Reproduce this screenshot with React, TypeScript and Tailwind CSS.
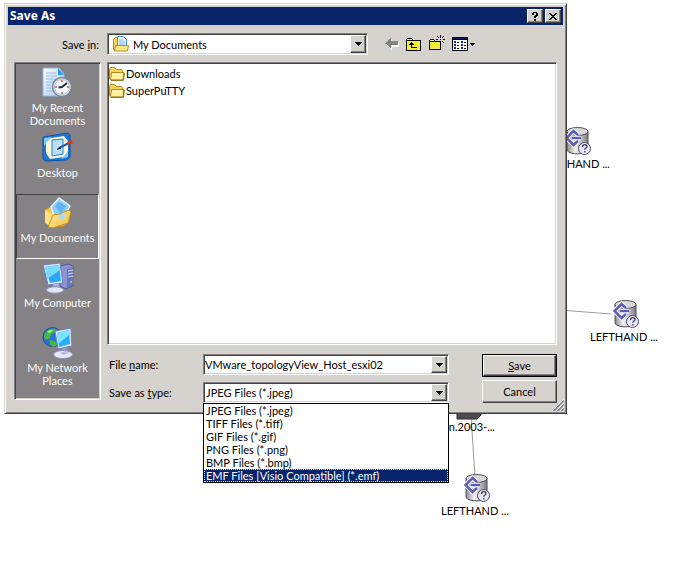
import { useId, type ReactNode } from "react";
import clsx from "clsx";

const FOLDERS = ["Downloads", "SuperPuTTY"];

const FILE_TYPES = [
  "JPEG Files (*.jpeg)",
  "TIFF Files (*.tiff)",
  "GIF Files (*.gif)",
  "PNG Files (*.png)",
  "BMP Files (*.bmp)",
  "EMF Files [Visio Compatible] (*.emf)",
];

const SUNKEN =
  "border border-t-[#848284] border-l-[#848284] border-r-white border-b-white p-px shadow-[inset_1px_1px_0_#424142,inset_-1px_-1px_0_#d6d3ce]";
const RAISED =
  "border border-t-white border-l-white border-r-[#424142] border-b-[#424142] bg-[#d6d3ce] shadow-[inset_-1px_-1px_0_#848284]";

/* ---------- place bar icons ---------- */

function RecentIcon() {
  const id = useId();
  return (
    <svg viewBox="0 0 32 32" className="h-8 w-8" aria-hidden="true">
      <defs>
        <linearGradient id={id} x1="0" y1="0" x2="1" y2="1">
          <stop offset="0" stopColor="#ffffff" />
          <stop offset="1" stopColor="#9cc8f8" />
        </linearGradient>
      </defs>
      <path d="M1 1h16l5 6v22H1z" fill={`url(#${id})`} stroke="#8bb6ea" />
      <path d="M16 1v7h6z" fill="#2f9cf0" />
      <path d="M4 6h10M4 9h11M4 12h10M4 15h7M4 18h5M4 21h5M4 24h6" stroke="#9dbbe4" />
      <circle cx="20" cy="20" r="9.5" fill="#dfe6ee" stroke="#7b8796" strokeWidth="1.5" />
      <circle cx="20" cy="20" r="7.5" fill="#f7fbff" stroke="#a9c4e0" />
      <path d="M20 20l5-4M20.500 20l-4 .5" stroke="#182848" strokeWidth="1.800" />
      <path d="M20 13v2M20 25v2M13 20h2M25 20h2" stroke="#e0582c" strokeWidth="1.500" />
    </svg>
  );
}

function DesktopIcon() {
  return (
    <svg viewBox="0 0 32 32" className="h-8 w-8" aria-hidden="true">
      <path d="M1 5l25-4 2 2v22l-3 3-22 1-2-3z" fill="#1b78d8" stroke="#0b55ac" />
      <path d="M2 6l8-1-8 9zM26 17v8l-7 2z" fill="#7cc8ff" />
      <path d="M9 6l13-2 4 5v10l-5 6-13 2-4-6V11z" fill="#fff6d8" />
      <path d="M10 8l11-1v15l-11 2z" fill="#b9e0fb" stroke="#2787d8" />
      <path d="M13 18l6-6 2 3-5 3z" fill="#e6f5ff" />
      <path d="M17 16l10-5" stroke="#35589c" strokeWidth="2" />
      <path d="M15 17.500l4-2" stroke="#16213c" strokeWidth="1.500" />
      <path d="M26 11.500l4-2" stroke="#d83a1c" strokeWidth="3.500" />
    </svg>
  );
}

function DocumentsIcon() {
  const id = useId();
  return (
    <svg viewBox="0 0 32 32" className="h-8 w-8" aria-hidden="true">
      <defs>
        <linearGradient id={id} x1="0" y1="0" x2="1" y2="1">
          <stop offset="0" stopColor="#fff3a8" />
          <stop offset="1" stopColor="#f2b93a" />
        </linearGradient>
      </defs>
      <path d="M3 13l5-3 3 2 8-3 6 6-3 14-15 1z" fill="#f4c64c" stroke="#c88f1c" />
      <path d="M9 10l8-9 11 8-6 11-9 1z" fill="#8fd0fa" stroke="#e9f7ff" strokeWidth="1.500" />
      <path d="M13 9l4-4 7 4-5 8z" fill="#5fb4f0" />
      <path d="M3 13l8 5-3 11-5-3z" fill="#ffe27a" />
      <path d="M11 18l7-1 9-4 2 2-3 11-15 5-5-1z" fill={`url(#${id})`} stroke="#c88f1c" />
      <path d="M16 20l5-4 3 3-5 4z" fill="#a8dcff" />
    </svg>
  );
}

function ComputerIcon() {
  return (
    <svg viewBox="0 0 32 32" className="h-8 w-8" aria-hidden="true">
      <path d="M18 4l9-2 5 3v18l-8 4-6-3z" fill="#8d94d4" stroke="#4c55a0" />
      <path d="M25 7l7-2v18l-7 3z" fill="#6b74be" />
      <path d="M26 9l5-1M26 12l5-1M26 15l5-1" stroke="#d5daf8" />
      <path d="M28 19h2v2h-2z" fill="#7ce070" />
      <path d="M1 3l17-2 3 20-15 2z" fill="#dfe5fa" stroke="#6e7cc0" />
      <path d="M3 5l14-2 2 16-11 2z" fill="#28a9f4" />
      <path d="M3 5l14-2 1 5-13 9z" fill="#76dcff" />
      <path d="M11 22l6-1 1 6-6 1z" fill="#a9b2d8" />
      <ellipse cx="13" cy="28" rx="8.500" ry="3.200" fill="#e2e6f4" stroke="#8c94b8" />
    </svg>
  );
}

function NetworkIcon() {
  return (
    <svg viewBox="0 0 32 32" className="h-8 w-8" aria-hidden="true">
      <circle cx="10.500" cy="10" r="9.500" fill="#2a70d8" stroke="#174ea4" />
      <path d="M3 6c4-5 8-5 11-4l-2 4-3 1-1 4-4 2-2-3zM8 13l5 1 2 4-4 2-3-3z" fill="#46b83c" />
      <path d="M5 5c2-2 4-2 6-2l-3 3z" fill="#a4f08c" />
      <path d="M13 4l16-3 1 18-14 3z" fill="#dfe5fa" stroke="#6e7cc0" />
      <path d="M15 6l12-3 1 14-11 3z" fill="#28b0f4" />
      <path d="M15 6l12-3v5l-11 9z" fill="#7ce2ff" />
      <path d="M20 21l5-1 1 6-5 1z" fill="#9099c8" />
      <ellipse cx="21" cy="27.500" rx="9.500" ry="4" fill="#e6e9f5" stroke="#8c94b8" />
      <path d="M18 26l6-2 3 2-6 2z" fill="#b8bfdc" />
    </svg>
  );
}

const PLACES: { lines: string[]; icon: ReactNode; active?: boolean }[] = [
  { lines: ["My Recent", "Documents"], icon: <RecentIcon /> },
  { lines: ["Desktop"], icon: <DesktopIcon /> },
  { lines: ["My Documents"], icon: <DocumentsIcon />, active: true },
  { lines: ["My Computer"], icon: <ComputerIcon /> },
  { lines: ["My Network", "Places"], icon: <NetworkIcon /> },
];

/* ---------- small icons ---------- */

function FolderIcon() {
  return (
    <svg viewBox="0 0 16 14" className="h-3.5 w-4 shrink-0" aria-hidden="true">
      <path d="M.5 2.500l1-2h4l2 2h5l1 1v9h-12l-1-1z" fill="#f7d35c" stroke="#b58a1e" />
      <path d="M2.500 5.500h12.500l-1 7.500H1.500z" fill="#ffee9c" stroke="#b58a1e" />
      <path d="M4 7h10" stroke="#fffbd8" />
      <path d="M2 13.300h12.500l.8-7" fill="none" stroke="#8a6710" />
    </svg>
  );
}

function MyDocsSmallIcon() {
  return (
    <svg viewBox="0 0 16 16" className="ml-1 h-4 w-4 shrink-0" aria-hidden="true">
      <path d="M.5 3.500l2-2h3v13h-4l-1-1z" fill="#f7d35c" stroke="#b58a1e" />
      <path d="M4.500.5h6l3 3v9h-9z" fill="#e9f5ff" stroke="#3c8ed8" />
      <path d="M6 4h4M6 6h6M6 8h6" stroke="#7cb6ea" />
      <path d="M2.500 9.500h13l-1 5.500h-13z" fill="#ffe681" stroke="#b58a1e" />
    </svg>
  );
}

function DropArrow() {
  return (
    <svg viewBox="0 0 7 4" className="h-1 w-[7px]" shapeRendering="crispEdges" aria-hidden="true">
      <path d="M0 0h7v1H6v1H5v1H4v1H3V3H2V2H1V1H0z" fill="#000" />
    </svg>
  );
}

function BackIcon() {
  return (
    <svg viewBox="0 0 14 12" className="h-3 w-3.5" shapeRendering="crispEdges" aria-hidden="true">
      <path d="M1 6h1V5h1V4h1V3h1V2h1V1h1v3h7v5H7v3H6v-1H5v-1H4V9H3V8H2V7H1z" fill="#fff" />
      <path d="M0 5h1V4h1V3h1V2h1V1h1V0h1v3h7v4H6v3H5V9H4V8H3V7H2V6H0z" fill="#848284" />
    </svg>
  );
}

function UpIcon() {
  return (
    <svg viewBox="0 0 15 13" className="h-[13px] w-[15px]" shapeRendering="crispEdges" aria-hidden="true">
      <path d="M0 1h1V0h5v1h1v1h8v11H0z" fill="#000" />
      <path d="M1 1h5v1H1zM1 3h13v9H1z" fill="#f5ee3a" />
      <path d="M5 4h1v1h1v1h1v1H6v2h5v1H5V7H3V6h1V5h1z" fill="#000" />
    </svg>
  );
}

function NewFolderIcon() {
  return (
    <svg viewBox="0 0 16 16" className="h-4 w-4" shapeRendering="crispEdges" aria-hidden="true">
      <path d="M0 5h1V4h4v1h1v1h6v9H0z" fill="#000" />
      <path d="M1 5h4v1H1zM1 7h10v7H1z" fill="#f5ee3a" />
      <path
        d="M11 0h1v3h-1zM11 6h1v3h-1zM7 4h2v1H7zM14 4h2v1h-2zM8 1h1v1H8zM9 2h1v1H9zM14 1h1v1h-1zM13 2h1v1h-1zM13 6h1v1h-1zM14 7h1v1h-1zM9 6h1v1H9zM11 4h1v1h-1z"
        fill="#000"
      />
    </svg>
  );
}

function ViewsIcon() {
  return (
    <svg viewBox="0 0 16 14" className="h-3.5 w-4" shapeRendering="crispEdges" aria-hidden="true">
      <path d="M0 0h16v14H0z" fill="#000" />
      <path d="M1 1h14v1H1z" fill="#08246b" />
      <path d="M1 3h14v10H1z" fill="#fff" />
      <path d="M2 4h2v2H2zM9 4h2v2H9zM2 7h2v2H2zM9 7h2v2H9zM2 10h2v2H2zM9 10h2v2H9z" fill="#1c1c9c" />
      <path d="M5 5h2v1H5zM12 5h2v1h-2zM5 8h2v1H5zM12 8h2v1h-2zM5 11h2v1H5zM12 11h2v1h-2z" fill="#000" />
    </svg>
  );
}

function StorageIcon() {
  const id = useId();
  return (
    <svg viewBox="0 0 27 28" className="h-7 w-[27px]" aria-hidden="true">
      <defs>
        <linearGradient id={id}>
          <stop offset="0" stopColor="#8c8c8c" />
          <stop offset="0.4" stopColor="#f4f4f4" />
          <stop offset="1" stopColor="#7c7c7c" />
        </linearGradient>
      </defs>
      <path d="M2 4.500v19c3 4.500 18 4.500 21 0v-19z" fill={`url(#${id})`} stroke="#4c4c5c" />
      <ellipse cx="12.500" cy="4.500" rx="10.500" ry="4" fill="#d8d8d8" stroke="#4c4c5c" />
      <path d="M13 8L8.500 4 1.500 11l7 7 4.500-4M7 11h9" fill="none" stroke="#fff" strokeWidth="4.500" />
      <path d="M13 8L8.500 4 1.500 11l7 7 4.500-4M7 11h9" fill="none" stroke="#5c5cc0" strokeWidth="2.500" />
      <circle cx="19.500" cy="21.500" r="6" fill="#e8e8f4" stroke="#4c4c70" />
      <path d="M17.500 20c0-3 4.500-3 4.500-.5 0 1.500-2.200 1.500-2.200 3.200M19.800 24v1.500" fill="none" stroke="#3c3c68" strokeWidth="1.300" />
    </svg>
  );
}

/* ---------- parts ---------- */

function StorageNode({ className }: { className: string }) {
  return (
    <div className={clsx("absolute flex w-[70px] flex-col items-center", className)}>
      <span className="pl-1"><StorageIcon /></span>
      <span className="mt-0.5 whitespace-nowrap">LEFTHAND ...</span>
    </div>
  );
}

function ArrowBox() {
  return (
    <span className={clsx("pointer-events-none flex w-4 shrink-0 items-center justify-center", RAISED)}>
      <DropArrow />
    </span>
  );
}

function PlacesBar() {
  return (
    <nav className={clsx("w-[87px] shrink-0 self-start bg-[#848284] pb-2.5", SUNKEN)}>
      {PLACES.map((p) => (
        <button
          key={p.lines[0]}
          type="button"
          className={clsx(
            "flex h-[65px] w-full flex-col items-center border pt-0.5 text-white",
            p.active ? "border-t-[#424142] border-l-[#424142] border-r-white border-b-white" : "border-transparent"
          )}
        >
          {p.icon}
          <span className="mt-0.5 block leading-[13px] whitespace-nowrap">
            {p.lines.map((line) => (
              <span key={line} className="block">{line}</span>
            ))}
          </span>
        </button>
      ))}
    </nav>
  );
}

function SaveDialog() {
  return (
    <section
      role="dialog"
      aria-label="Save As"
      className="relative mr-[122px] ml-1 border border-t-[#d6d3ce] border-l-[#d6d3ce] border-r-[#424142] border-b-[#424142] bg-[#d6d3ce] p-[3px] pb-2.5 shadow-[inset_1px_1px_0_#fff,inset_-1px_-1px_0_#848284]"
    >
      <header className="flex h-[18px] items-center gap-0.5 bg-[#08246b] px-0.5">
        <h1 className="flex-1 font-['Noto_Sans',sans-serif] text-xs leading-4 font-bold text-white">Save As</h1>
        <button type="button" aria-label="Help" className={clsx("flex h-3.5 w-4 items-center justify-center", RAISED)}>
          <svg viewBox="0 0 6 9" className="h-[9px] w-1.5" shapeRendering="crispEdges" aria-hidden="true">
            <path d="M1 0h4v1h1v3H5v1H4v1H2V4h1V3h1V1H2v2H0V1h1zM2 7h2v2H2z" fill="#000" />
          </svg>
        </button>
        <button type="button" aria-label="Close" className={clsx("flex h-3.5 w-4 items-center justify-center", RAISED)}>
          <svg viewBox="0 0 8 7" className="h-[7px] w-2" shapeRendering="crispEdges" aria-hidden="true">
            <path d="M0 0h2v1h1v1h2V1h1V0h2v1H7v1H6v1H5v1h1v1h1v1h1v1H6V6H5V5H3v1H2v1H0V6h1V5h1V4h1V3H2V2H1V1H0z" fill="#000" />
          </svg>
        </button>
      </header>

      <div className="px-1.5 pt-2">
        {/* Look-in row */}
        <div className="flex items-center gap-1.5">
          <label htmlFor="save-in" className="w-[87px] pr-0.5 text-right">
            Save <u>i</u>n:
          </label>
          <div className={clsx("flex h-[22px] flex-1 bg-white", SUNKEN)}>
            <span className="flex flex-1 items-center">
              <MyDocsSmallIcon />
              <select id="save-in" className="flex-1 appearance-none bg-transparent pl-1 outline-none">
                <option>My Documents</option>
              </select>
            </span>
            <ArrowBox />
          </div>
          <div className="flex w-[183px] items-center pl-[11px]">
            <button type="button" aria-label="Back"><BackIcon /></button>
            <button type="button" aria-label="Up one level" className="ml-[7px]"><UpIcon /></button>
            <button type="button" aria-label="New folder" className="ml-2 pb-0.5"><NewFolderIcon /></button>
            <button type="button" aria-label="Views" className="ml-[7px] flex items-center gap-0.5">
              <ViewsIcon />
              <svg viewBox="0 0 5 3" className="h-[3px] w-[5px]" shapeRendering="crispEdges" aria-hidden="true">
                <path d="M0 0h5v1H4v1H3v1H2V2H1V1H0z" fill="#000" />
              </svg>
            </button>
          </div>
        </div>

        <div className="mt-[7px] flex gap-1.5">
          <PlacesBar />

          <div className="min-w-0 flex-1">
            <div className={clsx("h-[283px] bg-white", SUNKEN)}>
              <ul className="pt-px">
                {FOLDERS.map((name) => (
                  <li key={name} className="flex h-[17px] items-center gap-px">
                    <FolderIcon />
                    {name}
                  </li>
                ))}
              </ul>
            </div>

            <div className="mt-[9px] flex justify-between gap-[33px]">
              <div className="grid flex-1 grid-cols-[96px_1fr] content-start items-center gap-y-[7px]">
                <label htmlFor="file-name" className="pl-0.5">
                  File <u>n</u>ame:
                </label>
                <div className={clsx("flex h-[21px] bg-white", SUNKEN)}>
                  <input
                    id="file-name"
                    type="text"
                    defaultValue="VMware_topologyView_Host_esxi02"
                    className="min-w-0 flex-1 bg-transparent outline-none"
                  />
                  <ArrowBox />
                </div>

                <label htmlFor="file-type" className="pl-0.5">
                  Save as <u>t</u>ype:
                </label>
                <div className={clsx("relative flex h-[21px] bg-white", SUNKEN)}>
                  <select id="file-type" className="min-w-0 flex-1 appearance-none bg-transparent pl-px outline-none">
                    {FILE_TYPES.map((t) => (
                      <option key={t}>{t}</option>
                    ))}
                  </select>
                  <ArrowBox />
                  <ul
                    role="listbox"
                    aria-label="Save as type"
                    className="absolute top-5 -right-px -left-px z-10 border border-black bg-white"
                  >
                    {FILE_TYPES.map((t, i) => (
                      <li
                        key={t}
                        role="option"
                        aria-selected={i === FILE_TYPES.length - 1}
                        className={clsx(
                          "h-[13px] pl-0.5 leading-[13px] whitespace-nowrap",
                          i === FILE_TYPES.length - 1 &&
                            "bg-[#08246b] text-white outline-1 -outline-offset-1 outline-[#f7db94] outline-dotted"
                        )}
                      >
                        {t}
                      </li>
                    ))}
                  </ul>
                </div>
              </div>

              <div className="flex w-[75px] flex-col gap-[3px]">
                <button type="submit" className="h-[23px] border border-black">
                  <span className={clsx("flex h-full items-center justify-center", RAISED)}>
                    <span><u>S</u>ave</span>
                  </span>
                </button>
                <button type="button" className={clsx("h-[23px]", RAISED)}>Cancel</button>
              </div>
            </div>
          </div>
        </div>
      </div>

      {/* Resize grip */}
      <svg viewBox="0 0 12 12" className="absolute right-0.5 bottom-0.5 h-3 w-3" aria-hidden="true">
        <path d="M0 12L12 0M4 12l8-8M8 12l4-4" stroke="#fff" />
        <path d="M1.500 12L12 1.500M5.500 12L12 5.500M9.500 12L12 9.500" stroke="#848284" strokeWidth="1.500" />
      </svg>
    </section>
  );
}

export default function App() {
  return (
    <main className="relative min-h-screen overflow-hidden bg-white pt-[3px] font-[Lato,Arial,sans-serif] text-[11px] leading-[13px] text-black">
      {/* Topology map behind the dialog */}
      <svg className="absolute inset-0 h-full w-full" aria-hidden="true">
        <path d="M560 310l51 4M471 416l4 60" stroke="#9c9c9c" fill="none" />
        <path d="M457 408h24v7l-4 4h-20z" fill="#4c4c4c" stroke="#2c2c34" />
      </svg>
      <StorageNode className="top-[127px] left-[541px]" />
      <StorageNode className="top-[300px] left-[589px]" />
      <StorageNode className="top-[474px] left-[440px]" />
      <span className="absolute top-[420px] left-[440px] whitespace-nowrap">iqn.2003-...</span>

      <SaveDialog />
    </main>
  );
}
